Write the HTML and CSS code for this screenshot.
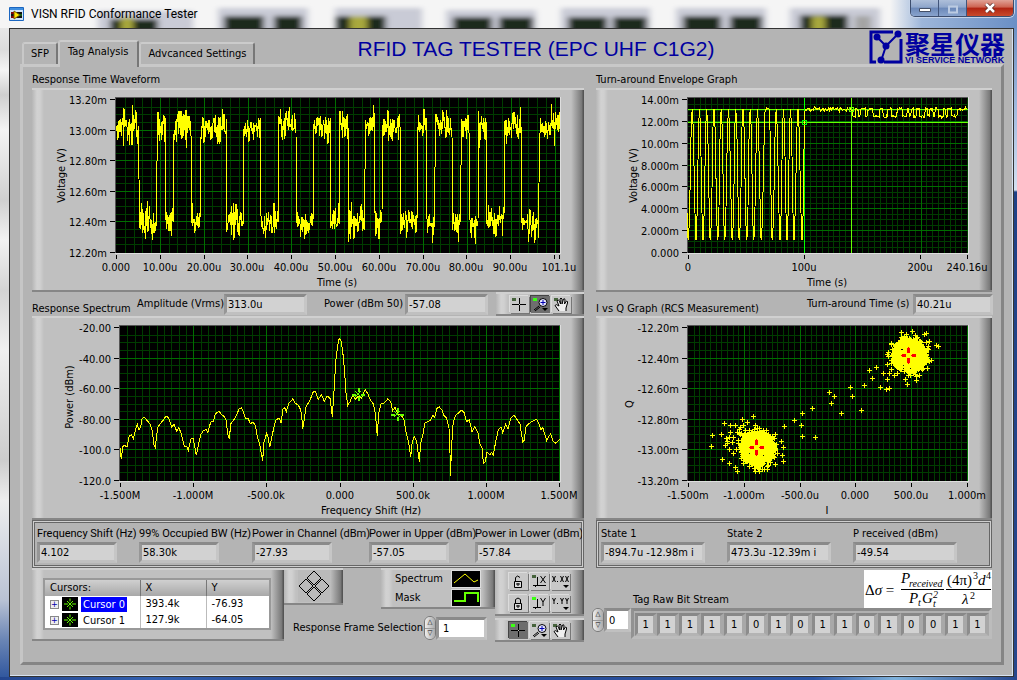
FILE: index.html
```html
<!DOCTYPE html>
<html lang="en">
<head>
<meta charset="utf-8">
<title>VISN RFID Conformance Tester</title>
<link rel="stylesheet" href="styles.css">
</head>
<body>
<svg class="defs" aria-hidden="true">
  <defs>
    <symbol id="i-cross" viewBox="0 0 19 17"><path class="led" d="M2 2h4v3h-4z"/><path class="ln" d="M2 8.500h14M9.500 2v13"/><path class="face-dot" d="M9 8h1v1h-1z"/></symbol>
    <symbol id="i-zoom" viewBox="0 0 19 17"><path class="led" d="M2 2h4v3h-4z"/><path class="ln" d="M3 14l5-4M4 15l5-4"/><circle cx="12" cy="6.500" r="4" fill="#e6e6ff" stroke="#000"/><path d="M9.500 6.500h5M12 4v5" stroke="#0000b0" fill="none"/><path d="M11 12h6l-3 3z"/></symbol>
    <symbol id="i-hand" viewBox="0 0 19 17"><path class="led" d="M2 2h4v3h-4z"/><path d="M7 15L3 9.500Q4 7.500 7 10L5 5Q6 3 7.500 5L8.500 8 8 3Q9 1 10 3V8L11.500 3Q13 2 13 4L12.500 8 14.500 5Q16 5 15.500 7L14 12V15" fill="#eee" stroke="#000"/></symbol>
    <symbol id="i-unlock" viewBox="0 0 19 17"><path class="ln" d="M6.500 8V4.500Q8.500 1.500 11 4.500"/><path d="M5.500 8.500h7v6h-7z" fill="#ddd" stroke="#000"/><path d="M7 11h4M9 10v3" stroke="#000"/></symbol>
    <symbol id="i-lock" viewBox="0 0 19 17"><path class="ln" d="M6.500 8V4.500Q9 1.500 11.500 4.500V8"/><path d="M5.500 8.500h7v6h-7z" fill="#ddd" stroke="#000"/><path d="M7 11h4M9 10v3" stroke="#000"/></symbol>
    <symbol id="i-autox" viewBox="0 0 19 17"><path class="led" d="M2 2h4v3h-4z"/><path class="ln" d="M7.500 4v8.500M3 12.500h13M5 14l2-2M10.500 3l5 7M15.500 3l-5 7"/></symbol>
    <symbol id="i-autoy" viewBox="0 0 19 17"><path class="led on" d="M2 2h4v3h-4z"/><path class="ln" d="M7.500 4v8.500M3 12.500h8M5 14l2-2M10.500 3l2.500 4 2.500-4M13 7v4"/></symbol>
    <symbol id="i-fmtx" viewBox="0 0 19 17"><path class="ln" d="M1.500 3l3 6M4.500 3l-3 6M9.500 3l3 6M12.500 3l-3 6M14.500 3l3 6M17.500 3l-3 6M6.500 8v1"/><path d="M12 12h6l-3 3z"/></symbol>
    <symbol id="i-fmty" viewBox="0 0 19 17"><path class="ln" d="M1.500 3l1.500 3 1.500-3M3 6v3M9.500 3l1.500 3 1.500-3M11 6v3M14.500 3l1.500 3 1.500-3M16 6v3M6.500 8v1"/><path d="M12 12h6l-3 3z"/></symbol>
    <symbol id="i-cursor" viewBox="0 0 16 14"><path d="M0 0h16v14H0z"/><path d="M8 1.500v3M8 9.500v3M2 7h4M10 7h4M5 4l6 6M11 4l-6 6" stroke="#6f0" fill="none"/></symbol>
  </defs>
</svg>

<div class="window">
  <svg class="glass" viewBox="0 0 1017 28" preserveAspectRatio="none" aria-hidden="true">
    <defs>
      <filter id="soft" x="-5%" y="-60%" width="110%" height="220%"><feGaussianBlur stdDeviation="3 2"/></filter>
      <linearGradient id="sky"><stop offset="0" stop-color="#f5f5f5"/><stop offset=".25" stop-color="#9db6da"/><stop offset="1" stop-color="#6a8fc6"/></linearGradient>
    </defs>
    <path d="M0 0h1017v28H0z" fill="#f5f5f5"/>
    <path d="M890 0h127v28H890z" fill="url(#sky)"/>
    <g filter="url(#soft)">
      <path fill="#c9cbd6" d="M98 11h95v22H98zM218 8h90v25h-90zM335 8h87v25h-87zM446 10h90v24h-90zM561 8h89v25h-89zM676 8h90v25h-90zM790 8h90v25h-90z"/>
      <path fill="#1d2a1c" d="M110 19h48v14h-48zM224 16h40v17h-40zM274 16h28v17h-28zM336 16h50v17h-50zM453 17h39v17h-39zM499 17h34v17h-34zM568 17h39v17h-39zM613 17h34v17h-34zM683 16h38v17h-38zM730 16h32v17h-32zM800 15h48v17h-48z"/>
      <path fill="#a9a93c" d="M121 17h12v16h-12zM350 16h17v17h-17zM812 16h13v17h-13z"/>
      <path fill="#a4a4a4" d="M855 16h16v17h-16z"/>
    </g>
  </svg>
  <header class="titlebar">
    <svg class="appicon" width="15" height="14" viewBox="0 0 15 14" aria-hidden="true"><path d="M.5.500h14v13H.5z" fill="#cfe3f7" stroke="#1b66c0"/><path d="M1 1h13v2H1z" fill="#3f8fe0"/><path d="M2 5h11v6H2z" fill="#111"/><path d="M5 4l6 4-6 4z" fill="#ffe600" stroke="#7a5c00"/><path d="M2 6h3M2 10h3" stroke="#e00000"/><path d="M10 8h3" stroke="#1aa01a"/></svg>
    <span class="caption">VISN RFID Conformance Tester</span>
    <div class="winbtns">
      <button class="wb" aria-label="Minimize"><svg width="12" height="6" viewBox="0 0 12 6"><path d="M.5 1.500h11v3H.5z" fill="#fff" stroke="#444f66"/></svg></button>
      <button class="wb" aria-label="Maximize"><svg width="12" height="10" viewBox="0 0 12 10"><path d="M2 1.500h8v6H2z" fill="none" stroke="#bccbe2" stroke-width="2"/></svg></button>
      <button class="wb close" aria-label="Close"><svg width="12" height="10" viewBox="0 0 12 10"><path d="M2 1l8 8M10 1L2 9" stroke="#5a2a24" stroke-width="4"/><path d="M2 1l8 8M10 1L2 9" stroke="#fff" stroke-width="2.500"/></svg></button>
    </div>
  </header>

  <main class="client">
    <div class="head">
      <nav class="tabs">
        <button class="tab">SFP</button>
        <button class="tab active">Tag Analysis</button>
        <button class="tab">Advcanced Settings</button>
      </nav>
      <h1>RFID TAG TESTER (EPC UHF C1G2)</h1>
      <div class="logo">
        <svg width="34" height="34" viewBox="0 0 34 34" aria-hidden="true"><path d="M24 2H2v30h5M15 32h17V9" fill="none" stroke="#0000a0" stroke-width="3"/><path d="M8 7l9 9 12-12M17 16l-5 15" fill="none" stroke="#0000a0" stroke-width="2"/><g fill="#0000a0"><circle cx="8" cy="7" r="3.500"/><circle cx="29" cy="4" r="3.500"/><circle cx="17" cy="16" r="3.500"/><circle cx="12" cy="30" r="3.500"/></g></svg>
        <div class="logotext"><span class="cn" lang="zh">聚星仪器</span><span class="en">VI SERVICE NETWORK</span></div>
      </div>
    </div>

    <div class="page">
      <section class="col">
        <h2>Response Time Waveform</h2>
        <div class="bezel"><svg class="chart" id="waveform" viewBox="32 90 552 200" role="img" aria-label="Response Time Waveform"></svg></div>
        <div class="mid mid-left">
          <h2>Response Spectrum</h2>
          <label for="amp">Amplitude (Vrms)</label><input class="field" id="amp" value="313.0u" readonly>
          <label for="pow">Power (dBm 50)</label><input class="field" id="pow" value="-57.08" readonly>
          <div class="bezel tools">
            <button aria-label="Cursor"><svg><use href="#i-cross"/></svg></button><button class="down" aria-label="Zoom"><svg><use href="#i-zoom"/></svg></button><button aria-label="Pan"><svg><use href="#i-hand"/></svg></button>
          </div>
        </div>
        <div class="bezel"><svg class="chart" id="spectrum" viewBox="32 318 552 200" role="img" aria-label="Response Spectrum"></svg></div>
        <div class="stats stats-left">
          <div><label for="s1">Frequency Shift (Hz)</label><input class="field" id="s1" value="4.102" readonly></div>
          <div><label for="s2">99% Occupied BW (Hz)</label><input class="field" id="s2" value="58.30k" readonly></div>
          <div><label for="s3">Power in Channel (dBm)</label><input class="field" id="s3" value="-27.93" readonly></div>
          <div><label for="s4">Power in Upper (dBm)</label><input class="field" id="s4" value="-57.05" readonly></div>
          <div><label for="s5">Power in Lower (dBm)</label><input class="field" id="s5" value="-57.84" readonly></div>
        </div>
        <div class="foot">
          <div class="bezel cursors">
            <table>
              <thead><tr><th>Cursors:</th><th>X</th><th>Y</th></tr></thead>
              <tbody>
                <tr><td><span class="node"><button class="plus" aria-label="Expand">+</button><svg width="16" height="14"><use href="#i-cursor"/></svg><span class="sel">Cursor 0</span></span></td><td>393.4k</td><td>-76.93</td></tr>
                <tr><td><span class="node"><button class="plus" aria-label="Expand">+</button><svg width="16" height="14"><use href="#i-cursor"/></svg><span>Cursor 1</span></span></td><td>127.9k</td><td>-64.05</td></tr>
              </tbody>
            </table>
          </div>
          <div class="center">
            <div class="toprow">
              <div class="bezel mover"><svg width="32" height="32" viewBox="0 0 32 32" aria-hidden="true"><path d="M16 1l7 7-7 7-7-7zM8 9l7 7-7 7-7-7zM24 9l7 7-7 7-7-7zM16 17l7 7-7 7-7-7z" fill="none" stroke="#000"/></svg></div>
              <div class="bezel legend">
                <span>Spectrum</span><svg width="28" height="16" viewBox="0 0 28 16"><path d="M0 0h28v16H0z"/><path d="M2 12L13 3l9 8 4-2" fill="none" stroke="#ff0"/></svg>
                <span>Mask</span><svg width="28" height="16" viewBox="0 0 28 16"><path d="M0 0h28v16H0z"/><path d="M2 11h11V3h13v9" fill="none" stroke="#6f0" stroke-width="2"/></svg>
              </div>
            </div>
            <div class="frame">
              <label for="frame">Response Frame Selection</label>
              <div class="spin"><button aria-label="Up">△</button><button aria-label="Down">▽</button></div>
              <input class="field edit" id="frame" value="1">
            </div>
          </div>
          <div class="side">
            <div class="bezel tools six">
              <button aria-label="Unlock X"><svg><use href="#i-unlock"/></svg></button><button aria-label="Autoscale X"><svg><use href="#i-autox"/></svg></button><button aria-label="Format X"><svg><use href="#i-fmtx"/></svg></button>
              <button aria-label="Lock Y"><svg><use href="#i-lock"/></svg></button><button aria-label="Autoscale Y"><svg><use href="#i-autoy"/></svg></button><button aria-label="Format Y"><svg><use href="#i-fmty"/></svg></button>
            </div>
            <div class="bezel tools">
              <button class="down" aria-label="Cursor"><svg><use href="#i-cross"/></svg></button><button aria-label="Zoom"><svg><use href="#i-zoom"/></svg></button><button aria-label="Pan"><svg><use href="#i-hand"/></svg></button>
            </div>
          </div>
        </div>
      </section>

      <section class="col">
        <h2>Turn-around Envelope Graph</h2>
        <div class="bezel"><svg class="chart" id="envelope" viewBox="596 90 396 200" role="img" aria-label="Turn-around Envelope Graph"></svg></div>
        <div class="mid mid-right">
          <h2>I vs Q Graph (RCS Measurement)</h2>
          <label for="tat">Turn-around Time (s)</label><input class="field" id="tat" value="40.21u" readonly>
        </div>
        <div class="bezel"><svg class="chart" id="iq" viewBox="596 318 396 200" role="img" aria-label="I vs Q Graph"></svg></div>
        <div class="stats stats-right">
          <div><label for="r1">State 1</label><input class="field" id="r1" value="-894.7u -12.98m i" readonly></div>
          <div><label for="r2">State 2</label><input class="field" id="r2" value="473.3u -12.39m i" readonly></div>
          <div><label for="r3">P received (dBm)</label><input class="field" id="r3" value="-49.54" readonly></div>
        </div>
        <div class="bits">
          <div class="bitshead">
            <h2>Tag Raw Bit Stream</h2>
            <svg class="formula" width="128" height="38" viewBox="0 0 128 38" role="img" aria-label="Radar cross section formula">
              <path d="M0 0h128v38H0z" fill="#fff"/><path d="M37 19.500h43M82 19.500h45" stroke="#000"/>
              <text x="1" y="25">Δ<tspan class="it">σ</tspan> =</text>
              <text class="it" x="37" y="13">P</text><text class="it sub" x="45" y="17">received</text>
              <text class="it" x="45" y="33">P</text><text class="it sub" x="54" y="36">t</text>
              <text class="it" x="58" y="33">G</text><text class="it sub" x="69" y="28">2</text><text class="it sub" x="69" y="37">t</text>
              <text x="83" y="15">(4π)</text><text class="sub" x="109" y="9">3</text><text class="it" x="114" y="15">d</text><text class="sub" x="122" y="9">4</text>
              <text class="it" x="98" y="34">λ</text><text class="sub" x="106" y="29">2</text>
            </svg>
          </div>
          <div class="bitsrow">
            <div class="spin"><button aria-label="Up">△</button><button aria-label="Down">▽</button></div>
            <input class="field edit" aria-label="Index" value="0">
            <div class="array" id="bits"></div>
          </div>
        </div>
      </section>
    </div>
  </main>
</div>
<script src="charts.js"></script>
</body>
</html>
```
FILE: styles.css
```css
* { box-sizing: border-box; }
body {
  margin: 0;
  font: 11px/16px "DejaVu Sans Condensed", "Noto Sans", sans-serif;
  color: #000;
}
h1, h2 { margin: 0; font-weight: 400; }
button, input { font: inherit; color: inherit; margin: 0; }
.defs { position: absolute; width: 0; height: 0; }

.window {
  position: relative;
  min-height: 100vh;
  display: flex;
  flex-direction: column;
  padding: 0 3px 4px 9px;
  background:
    linear-gradient(#6d92c6 0 28px, #7d9ccb 50px, #a9c0e2 120px, #d5e0f0 190px, #1f4186 192px, #27478c) right / 3px 100% no-repeat,
    linear-gradient(90deg, #24468f, #3260b0 15%, #24468f 35%, #2a55a5 80%, #7fb2dc 88%, #24468f) bottom / 100% 4px no-repeat,
    linear-gradient(#f4f4f4, #dcdcdc 50px, #f4f4f4 70px, #cfcfcf 95px, #f4f4f4 130px, #d0d0d0 200px, #f2f2f2 240px, #d4d4d4 290px, #f0f0f0 350px, #ccc 460px, #eee 500px, #b9c2d4 600px, #6a85b5 640px, #2c539c);
}
.glass { position: absolute; left: 0; top: 0; width: 100%; height: 28px; }
.titlebar {
  position: relative;
  height: 28px;
  display: flex;
  align-items: center;
  gap: 7px;
}
.appicon { display: block; }
.caption { font: 12px/16px Roboto, sans-serif; }
.winbtns {
  align-self: flex-start;
  margin-left: auto;
  display: flex;
  height: 17px;
  border: 1px solid #3c4d6d;
  border-top: 0;
  border-radius: 0 0 5px 5px;
  overflow: hidden;
  box-shadow: 0 0 0 1px #c5d3e8;
}
.wb {
  width: 28px;
  border: 0;
  border-right: 1px solid #41557b;
  padding: 3px 0 0;
  display: flex;
  justify-content: center;
  align-items: center;
  background: linear-gradient(#aebfda, #8fa6cb 45%, #6b88b8 50%, #88a3cd);
}
.wb.close { width: 46px; border-right: 0; padding: 0; background: linear-gradient(#e0a296, #cd6350 45%, #b02412 50%, #c94a2c); }

.client {
  position: relative;
  flex: 1;
  background: #b4b4b4;
  border: 1px solid #333;
  box-shadow: inset -1px -1px #d6e2f2;
  padding: 3px 9px 11px 10px;
}
.head { display: flex; align-items: flex-end; height: 32px; }
.tabs { display: flex; align-items: flex-end; padding-left: 2px; }
.tab {
  height: 22px;
  padding: 0 7px;
  border: 2px solid;
  border-color: #cbcbcb #777 transparent #c8c8c8;
  border-bottom: 0;
  border-radius: 3px 3px 0 0;
  background: #b4b4b4;
  white-space: nowrap;
}
.tab.active { position: relative; z-index: 1; height: 27px; margin-bottom: -3px; padding: 0 9px 5px 8px; }
h1 {
  flex: 1;
  margin-left: 102px;
  font: 21px/30px "Liberation Sans", sans-serif;
  color: #0000a0;
  white-space: nowrap;
}
.logo { display: flex; gap: 2px; height: 34px; color: #0000a0; }
.logotext { display: flex; flex-direction: column; width: 99px; white-space: nowrap; }
.cn { font: bold 25px/26px "Noto Sans CJK SC", sans-serif; }
.en { font: bold 9px/9px "Liberation Sans", sans-serif; }

.page {
  display: grid;
  grid-template-columns: minmax(0, 552fr) minmax(0, 396fr);
  gap: 12px;
  padding: 5px 9px 20px;
  border: 3px solid;
  border-color: #c8c8c8 #858585 #858585 #c6c6c6;
}
.col h2 { font-size: 11px; line-height: 16px; white-space: nowrap; }
.col label { white-space: nowrap; }

.bezel {
  border: solid;
  border-width: 2px 0;
  border-color: #d0d0d0 transparent #868686;
  background:
    linear-gradient(90deg, #b6b6b6, #d2d2d2 5px, #d0d0d0 8px, #c0c0c0 12px, transparent 12px),
    linear-gradient(270deg, #555 0 1px, #777 2px, #c0c0c0 13px, transparent 13px),
    #c0c0c0;
}
.chart { display: block; width: 100%; height: auto; }
.chart text { font: 11px "DejaVu Sans Condensed", "Noto Sans", sans-serif; }

.mid { display: grid; height: 24px; align-items: center; }
.mid h2 { align-self: end; line-height: 15px; }
.mid-left { grid-template-columns: minmax(0, 105fr) minmax(0, 87fr) minmax(0, 100fr) minmax(0, 81fr) minmax(0, 91fr) minmax(0, 88fr); }
.mid-left .field { width: 83px; }
.mid-right { grid-template-columns: minmax(0, 211fr) minmax(0, 106fr) minmax(0, 79fr); }

.field {
  display: block;
  width: 80px;
  height: 21px;
  padding: 0 1px;
  border: 3px solid;
  border-color: #8a8a8a #c6c6c6 #c0c0c0 #969696;
  border-radius: 0;
  background: #d2d2d2;
  outline: 0;
}
.field.edit { background: #fff; padding: 0 4px; }

.tools { display: flex; justify-content: center; align-items: center; gap: 2px; height: 24px; }
.tools button {
  width: 19px;
  height: 17px;
  padding: 0;
  border: 0;
  background: #c8c8c8;
  box-shadow: 1px 1px #777, -1px -1px #dcdcdc;
}
.tools button.down { --led: #3cff14; background: #6e6e6e; box-shadow: 1px 1px #ccc, -1px -1px #444; }
.tools svg { display: block; width: 19px; height: 17px; }
.six { display: grid; grid-template-columns: repeat(3, 19px); height: 48px; align-content: center; gap: 5px 2px; }
.side { display: grid; gap: 2px; }
.ln { fill: none; stroke: #000; }
.led { fill: var(--led, #46633c); }
.led.on { fill: #3cff14; }
.face-dot { fill: #c8c8c8; }

.stats {
  display: grid;
  height: 48px;
  padding: 3px 0 0 2px;
  border: 3px double #666;
  outline: 1px solid #cfcfcf;
  outline-offset: -2px;
}
.stats label { display: block; line-height: 16px; }
.stats-left { grid-template-columns: minmax(0, 102fr) minmax(0, 113fr) minmax(0, 117fr) minmax(0, 106fr) minmax(0, 106fr); }
.stats-left label { font-family: Roboto, sans-serif; }
.stats-right { grid-template-columns: minmax(0, 126fr) minmax(0, 126fr) minmax(0, 136fr); }
.stats-right .field { width: 104px; }

.foot { display: grid; grid-template-columns: minmax(0, 252fr) minmax(0, 211fr) minmax(0, 89fr); align-items: start; }
.cursors { padding: 8px 13px 9px 11px; }
table { width: 100%; border-collapse: collapse; table-layout: fixed; background: #fff; border: 2px solid #999; }
th, td { padding: 0 5px; height: 17px; line-height: 16px; text-align: left; font-weight: 400; white-space: nowrap; border-right: 1px solid #bbb; }
td { height: 16px; }
th { background: linear-gradient(#d0d0d0, #a8a8a8); border-right-color: #777; }
th:nth-child(2) { width: 66px; }
th:nth-child(3) { width: 64px; }
.node { display: flex; align-items: center; gap: 3px; }
.sel { background: #00f; color: #fff; }
.node > span { padding: 0 2px; line-height: 15px; }
.plus { width: 9px; height: 9px; padding: 0; border: 1px solid #888; background: #eee; font-size: 9px; line-height: 6px; color: #00a; }

.toprow { display: flex; justify-content: space-between; align-items: flex-start; }
.mover { width: 59px; height: 37px; padding-left: 14px; }
.mover svg { display: block; background: #bababa; }
.legend {
  width: 114px;
  height: 41px;
  padding: 0 15px 0 14px;
  display: grid;
  grid-template-columns: 1fr 28px;
  align-items: center;
}
.legend svg { outline: 1px solid #ddd; }
.frame { display: flex; align-items: center; justify-content: flex-end; padding: 7px 8px 0 9px; }
.frame label { margin-right: auto; }
.frame .field { width: 51px; height: 23px; }
.spin { display: flex; flex-direction: column; width: 12px; height: 24px; border-radius: 6px; overflow: hidden; border: 1px solid #777; background: #ccc; }
.spin button { flex: 1; padding: 0; border: 0; background: linear-gradient(90deg, #eee, #aaa); font-size: 7px; line-height: 9px; }
.spin button + button { border-top: 1px solid #999; }

.bits { margin-left: -4px; padding-top: 2px; }
.bitshead { display: flex; justify-content: space-between; align-items: flex-end; padding-left: 41px; }
.bitshead h2 { padding-bottom: 0; }
.formula { display: block; }
.formula text { font: 15px "Liberation Serif", serif; }
.formula .it { font-style: italic; }
.formula .sub { font-size: 10px; }
.bitsrow { display: flex; align-items: flex-start; }
.bitsrow > .field { width: 27px; height: 24px; padding: 0 2px; }
.array {
  flex: 1;
  display: grid;
  grid-template-columns: repeat(16, 1fr);
  border: 3px solid;
  border-color: #8a8a8a #bcbcbc #bcbcbc #929292;
  padding: 2px 0 0 1px;
  background: #b0b0b0;
}
.array .field { width: 100%; height: 23px; text-align: center; padding: 0; border-width: 3px 4px 3px 3px; border-color: #888 #a8a8a8 #b4b4b4 #8c8c8c; }
```
FILE: charts.js
```js
const NS = 'http://www.w3.org/2000/svg';
let seed = 7;
const rnd = () => (seed = (seed * 16807) % 2147483647) / 2147483647;
const gauss = () => rnd() + rnd() + rnd() + rnd() - 2;

function add(svg, tag, attrs, text) {
  const el = document.createElementNS(NS, tag);
  for (const k in attrs) el.setAttribute(k, attrs[k]);
  if (text !== undefined) el.textContent = text;
  svg.appendChild(el);
  return el;
}
const stroke = (svg, d, color, width = 1) =>
  add(svg, 'path', { d, fill: 'none', stroke: color, 'stroke-width': width, 'shape-rendering': 'crispEdges' });
const path = pts => 'M' + pts.map(p => p.join(' ')).join('L');

/* Draws plot area, grid, tick marks and axis labels. */
function frame(svg, o) {
  const { l, t, r, b } = o;
  add(svg, 'rect', { x: l - 1, y: t - 1, width: r - l + 2, height: b - t + 2, fill: '#dedede' });
  add(svg, 'path', { d: `M${l - 1} ${b}V${t - 1}H${r}V${b}z`, fill: '#555' });
  add(svg, 'rect', { x: l, y: t, width: r - l, height: b - t });
  let minor = '', major = '', ticks = '';
  const dx = o.stepX / o.minorX;
  for (let i = 1; l + i * dx < r; i++) {
    const s = `M${Math.round(l + i * dx) + .5} ${t}V${b}`;
    if (i % o.minorX) minor += s; else major += s;
  }
  const dy = (b - 1 - t - 1) / (o.ys.length - 1);
  for (let i = 0; i < (o.ys.length - 1) * 4; i++) {
    const s = `M${l} ${Math.round(t + 1 + i * dy / 4) + .5}H${r}`;
    if (i % 4) minor += s; else if (i) major += s;
  }
  stroke(svg, minor, '#003c00');
  stroke(svg, major, '#006e00');
  o.ys.forEach((s, i) => {
    const y = Math.round(t + 1 + i * dy) + .5;
    ticks += `M${l - 6} ${y}h5`;
    add(svg, 'text', { x: l - 9, y: y + 4, 'text-anchor': 'end' }, s);
  });
  o.xs.forEach(([x, s, at]) => {
    ticks += `M${x + .5} ${b + 2}v4`;
    if (s) add(svg, 'text', { x: at || x, y: b + 18, 'text-anchor': 'middle' }, s);
  });
  stroke(svg, ticks, '#000');
  const cy = (t + b) / 2;
  add(svg, 'text', { x: o.titleX, y: b + 33, 'text-anchor': 'middle' }, o.xt);
  add(svg, 'text', { transform: `translate(${o.yx} ${o.yc || cy}) rotate(-90)`, 'text-anchor': 'middle' }, o.yt);
}

/* Response time waveform */
{
  const svg = document.getElementById('waveform');
  frame(svg, { l: 116, t: 98, r: 560, b: 253, stepX: 43.85, minorX: 5,
    ys: ['13.20m', '13.00m', '12.80m', '12.60m', '12.40m', '12.20m'],
    xs: [[116, '0.000'], [160, '10.00u'], [204, '20.00u'], [247, '30.00u'], [291, '40.00u'], [335, '50.00u'],
         [379, '60.00u'], [423, '70.00u'], [466, '80.00u'], [510, '90.00u'], [554, '101.1u', 559], [559]],
    xt: 'Time (s)', titleX: 337, yt: 'Voltage (V)', yx: 65 });
  const edges = [139, 157, 165.5, 174, 191.5, 200.5, 226.5, 243.5, 260.5, 278.5, 296, 313.5, 330.5, 339.5, 348, 365,
    374.5, 382, 400, 417.5, 426, 435, 452, 461, 469.5, 478, 486.5, 504, 521.5, 539, 561];
  const pts = [];
  let e = 0;
  for (let x = 116; x < 560; x += .4) {
    while (x >= edges[e]) e++;
    const base = e % 2 ? 222 : 126;
    const spike = rnd() > .95 ? 1.6 : 1;
    const dev = Math.max(-22, Math.min(22, gauss() * 13 * spike));
    pts.push([x.toFixed(1), (base + dev).toFixed(1)]);
  }
  stroke(svg, path(pts), '#ff0');
}

/* Response spectrum */
{
  const svg = document.getElementById('spectrum');
  frame(svg, { l: 120, t: 326, r: 560, b: 481, stepX: 73.2, minorX: 10,
    ys: ['-20.00', '-40.00', '-60.00', '-80.00', '-100.0', '-120.0'],
    xs: [[120, '-1.500M'], [193, '-1.000M'], [266, '-500.0k'], [340, '0.000'], [413, '500.0k'], [486, '1.000M'], [559, '1.500M']],
    xt: 'Frequency Shift (Hz)', titleX: 371, yt: 'Power (dBm)', yx: 73, yc: 397 });
  const a = [300,473,304,508,308,470,313,466,321,471,328,438,334,435,340,446,345,425,352,403,357,420,362,410,366,386,372,382,
    380,390,390,402,397,422,402,465,406,472,413,412,420,403,430,390,436,381,442,379,448,388,455,412,462,402,470,424,476,413,
    483,428,493,468,500,470,505,481,513,446,520,446,529,496,537,455,543,433,550,422,558,418,563,428,572,396,580,394,586,372,
    597,364,606,375,613,380,618,390,623,432,628,448,632,402,640,392,650,375,657,357,664,354,670,365,676,385,685,386,691,402,
    698,396,706,406,712,440,719,462,728,514,731,460,740,430,745,445,749,472,757,435,762,410,768,390,777,384,783,398,789,358,
    794,353,799,365,806,340,818,327,826,340,835,345,842,360,846,390,848,418,854,380,858,350,868,335,874,320,880,305,886,304,
    895,328,904,314,913,333,922,318,930,325,937,380,941,320,944,270,947,215,953,165,958,145,964,155,970,200,974,250,978,310,
    983,346,990,335,998,315,1006,328,1015,318,1025,325,1030,308,1036,300,1043,310,1050,328,1060,342,1066,370,1072,438,
    1076,370,1083,342,1094,338,1104,326,1112,335,1118,362,1125,352,1133,372,1145,378,1152,390,1158,425,1165,452,1172,500,
    1177,455,1183,440,1190,455,1198,515,1202,460,1210,430,1214,400,1230,392,1238,376,1244,382,1251,355,1258,351,1266,360,
    1271,375,1280,385,1287,415,1290,490,1291,558,1295,470,1298,410,1302,390,1308,374,1316,369,1324,360,1333,368,1339,395,
    1348,390,1356,425,1364,411,1374,428,1380,463,1387,475,1390,520,1396,515,1401,485,1410,495,1414,487,1420,495,1428,450,
    1435,420,1443,410,1448,428,1457,403,1464,418,1472,385,1482,375,1492,390,1500,402,1508,455,1513,450,1518,410,1528,400,
    1540,392,1550,387,1558,405,1563,420,1568,412,1580,452,1586,440,1592,432,1600,455,1608,460,1619,447];
  const pts = [];
  for (let i = 0; i < a.length; i += 2) pts.push([(a[i] / 3 + 20).toFixed(1), (a[i + 1] / 3 + 290).toFixed(1)]);
  stroke(svg, path(pts), '#ff0');
  for (const [x, y] of [[358, 394], [397, 414]]) {
    stroke(svg, `M${x + .5} ${y - 6}v4M${x + .5} ${y + 3}v4M${x - 6} ${y + .5}h4M${x + 3} ${y + .5}h4`, '#6f0', 2);
    stroke(svg, `M${x - 3} ${y - 3}l6 6M${x + 3} ${y - 3}l-6 6`, '#6f0');
  }
}

/* Turn-around envelope */
{
  const svg = document.getElementById('envelope');
  frame(svg, { l: 688, t: 98, r: 968, b: 253, stepX: 116.3, minorX: 20,
    ys: ['14.00m', '12.00m', '10.00m', '8.000m', '6.000m', '4.000m', '2.000m', '0.000'],
    xs: [[688, '0'], [804, '100u'], [920, '200u'], [967, '240.16u']],
    xt: 'Time (s)', titleX: 827, yt: 'Voltage (V)', yx: 637 });
  const lo = [295, 318, 339, 361, 383, 404, 427, 448, 470, 491, 514, 547, 570, 591, 612, 636];
  const pts = [];
  lo.forEach((x, i) => {
    const n = lo[i + 1] || 645;
    pts.push([x - 3, 400], [x - 1, 474], [x, 480], [x + 1, 474], [x + 4, 380]);
    if (n - x > 30) pts.push([524, 100], [527, 90], [530, 84], [534, 88], [537, 84], [540, 150]);
    else if (n !== 645) pts.push([(x + n) / 2 - 3, 140], [(x + n) / 2, 86], [(x + n) / 2 + 3, 140]);
  });
  pts.push([640, 400], [642, 207], [645, 92]);
  for (let x = 646; x < 785; x += 3) pts.push([x, 88 + gauss() * 5]);
  const lows = [[787, 797], [805, 810], [827, 833], [850, 868], [880, 893], [905, 920], [937, 950], [957, 963], [972, 978],
    [990, 1005], [1013, 1018], [1030, 1035], [1045, 1060], [1067, 1072], [1085, 1102]];
  for (let x = 786; x < 1134; x += 2) {
    const low = lows.some(([p, q]) => x >= p && x <= q);
    pts.push([x, (low ? 109 : 87) + gauss() * 4]);
  }
  stroke(svg, 'M688 109.5H968M688 122.5H968M851.500 98V253', '#6f0');
  stroke(svg, 'M804.500 98V253', '#0f0');
  stroke(svg, path(pts.map(([x, y]) => [(x / 3 + 590).toFixed(1), (y / 3 + 80).toFixed(1)])), '#ff0');
  stroke(svg, 'M802.500 120.500h4v4h-4z', '#0f0');
  stroke(svg, 'M849.500 107.500h4v4h-4z', '#6f0');
}

/* I vs Q scatter */
{
  const svg = document.getElementById('iq');
  frame(svg, { l: 688, t: 326, r: 968, b: 481, stepX: 55.8, minorX: 10,
    ys: ['-12.20m', '-12.40m', '-12.60m', '-12.80m', '-13.00m', '-13.20m'],
    xs: [[688, '-1.500m'], [744, '-1.000m'], [800, '-500.0u'], [855, '0.000'], [911, '500.0u'], [967, '1.000m']],
    xt: 'I', titleX: 827, yt: 'Q', yx: 633, yc: 404 });
  let d = '';
  const plus = (x, y) => { x = Math.round(x); y = Math.round(y); d += `M${x - 2} ${y + .5}h5M${x + .5} ${y - 2}v5`; };
  for (const [cx, cy] of [[757, 448], [909, 355]]) {
    for (let i = 0; i < 560; i++) {
      const a = rnd() * Math.PI * 2, r = Math.sqrt(rnd()) * 17;
      plus(cx + Math.cos(a) * r, cy + Math.sin(a) * r);
    }
    for (let i = 0; i < 110; i++) {
      const a = rnd() * Math.PI * 2, r = 14 + rnd() * rnd() * 11;
      plus(cx + Math.cos(a) * r, cy + Math.sin(a) * r);
    }
  }
  const far = [367,436, 364,468, 403,400, 394,432, 410,460, 397,508, 418,520, 442,544, 434,530, 490,379, 457,388, 470,397, 421,404,
    434,404, 450,410, 420,425, 408,445, 427,455, 430,440, 416,478, 428,490, 404,465, 412,452, 440,425, 446,418, 460,405, 465,420,
    452,430, 418,440, 495,404, 528,420, 495,544, 508,544, 530,536, 556,522,
    580,514, 575,496, 580,472, 574,452, 583,409, 613,391, 634,406, 637,370, 667,355, 637,439, 676,442, 718,307, 733,319, 724,340,
    754,370, 781,292, 787,319, 823,286, 814,361, 847,265, 838,241, 859,232, 880,250, 892,268, 871,292, 889,298, 898,295, 892,223,
    898,250, 913,256, 902,160, 934,127, 947,133, 965,124, 1003,133, 1009,130, 1009,157, 1039,166, 1045,169, 952,283, 979,271,
    988,256, 1000,235, 970,250, 955,256, 1022,211];
  for (let i = 0; i < far.length; i += 2) plus(far[i] / 3 + 590, far[i + 1] / 3 + 290);
  stroke(svg, d, '#ff0');
  for (const [x, y] of [[756, 447], [908, 355]]) {
    stroke(svg, `M${x - 6} ${y + .5}h4M${x + 4} ${y + .5}h4M${x + .5} ${y - 7}v5M${x + .5} ${y + 3}v5`, '#f00', 3);
    stroke(svg, `M${x - 7} ${y + .5}h15M${x + .5} ${y - 8}v17`, '#f00');
    stroke(svg, `M${x - 2} ${y + .5}h5M${x + .5} ${y - 2}v5`, '#ff0', 3);
  }
}

/* Bit array */
const bits = document.getElementById('bits');
[...'1111101011010011'].forEach((b, i) => {
  const el = document.createElement('input');
  el.className = 'field';
  el.value = b;
  el.readOnly = true;
  el.setAttribute('aria-label', 'Bit ' + i);
  bits.appendChild(el);
});
```
